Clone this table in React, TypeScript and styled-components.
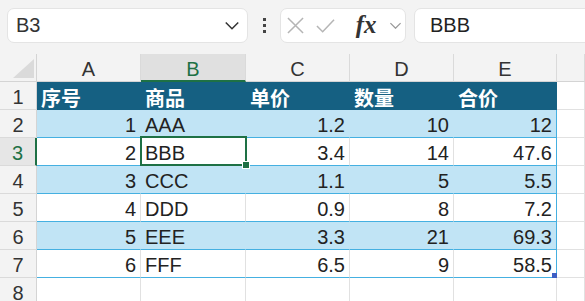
import React from 'react'
import styled, { createGlobalStyle, css } from 'styled-components'

const GREEN = '#1e7145'
const HEAD = '#156082'
const BAND = '#c1e4f5'
const LINE = '#45b0e1'
const GRID = '#e1e1e1'

type Tone = 'head' | 'band' | 'plain' | 'none'

const cols = ['A', 'B', 'C', 'D', 'E']
const header = ['序号', '商品', '单价', '数量', '合价']
const rows: (string | number)[][] = [
  [1, 'AAA', 1.2, 10, 12],
  [2, 'BBB', 3.4, 14, 47.6],
  [3, 'CCC', 1.1, 5, 5.5],
  [4, 'DDD', 0.9, 8, 7.2],
  [5, 'EEE', 3.3, 21, 69.3],
  [6, 'FFF', 6.5, 9, 58.5],
]

function App(): JSX.Element {
  return (
    <>
      <GlobalStyle />
      <FormulaBar>
        <NameBox>
          <span>B3</span>
          <Chevron size={16} color="#333" />
        </NameBox>
        <Kebab>
          <Dot />
          <Dot />
          <Dot />
        </Kebab>
        <ActionBox>
          <svg width="17" height="17" viewBox="0 0 18 18">
            <path d="M1 1 L17 17 M17 1 L1 17" stroke="#b5b5b5" strokeWidth="1.6" fill="none" />
          </svg>
          <svg width="19" height="16" viewBox="0 0 20 16">
            <path d="M1 8 L7 14 L19 1.5" stroke="#b5b5b5" strokeWidth="1.6" fill="none" />
          </svg>
          <Fx>fx</Fx>
          <Chevron size={13} color="#999" />
        </ActionBox>
        <FormulaInput>BBB</FormulaInput>
      </FormulaBar>

      <Sheet>
        <Corner>
          <svg width="21" height="19" viewBox="0 0 21 19">
            <path d="M21 0 L21 19 L0 19 Z" fill="#dadada" />
          </svg>
        </Corner>
        {cols.map((c) => (
          <ColHead key={c} $selected={c === 'B'}>
            {c}
          </ColHead>
        ))}
        <ColHead $selected={false} />

        <RowHead $selected={false}>1</RowHead>
        {header.map((h, i) => (
          <Cell key={h} $tone="head" $last={i === 4}>
            {h}
          </Cell>
        ))}
        <Cell $tone="none" />

        {rows.map((r, ri) => (
          <React.Fragment key={ri}>
            <RowHead $selected={ri === 1}>{ri + 2}</RowHead>
            {r.map((v, ci) => (
              <Cell
                key={ci}
                $tone={ri % 2 === 0 ? 'band' : 'plain'}
                $right={typeof v === 'number'}
                $last={ci === 4}
                $selected={ri === 1 && ci === 1}
                $resize={ri === 5 && ci === 4}
              >
                {v}
              </Cell>
            ))}
            <Cell $tone="none" />
          </React.Fragment>
        ))}

        <RowHead $selected={false}>8</RowHead>
        {cols.map((c) => (
          <Cell key={c} $tone="none" />
        ))}
        <Cell $tone="none" />
      </Sheet>
    </>
  )
}

function Chevron({ size, color }: { size: number; color: string }): JSX.Element {
  return (
    <svg width={size} height={size * 0.6} viewBox="0 0 16 10">
      <path d="M1.5 1.5 L8 8 L14.5 1.5" stroke={color} strokeWidth="1.6" fill="none" />
    </svg>
  )
}

const GlobalStyle = createGlobalStyle`
  html, body {
    margin: 0;
    background: #f3f3f3;
    overflow: hidden;
  }
  body {
    font-family: 'Liberation Sans', 'Noto Sans CJK SC', sans-serif;
    color: #222;
  }
`

const FormulaBar = styled.div`
  display: flex;
  align-items: center;
  height: 54px;
  padding: 0 0 3px 7px;
  box-sizing: border-box;
  overflow: hidden;
`

const Box = styled.div`
  height: 35px;
  box-sizing: border-box;
  background: #fff;
  border: 1px solid #e4e4e4;
  border-radius: 7px;
  display: flex;
  align-items: center;
`

const NameBox = styled(Box)`
  width: 241px;
  flex: none;
  justify-content: space-between;
  padding: 0 7px 0 8px;
  font-size: 20px;
  color: #333;
`

const Kebab = styled.div`
  width: 32px;
  flex: none;
  display: flex;
  flex-direction: column;
  align-items: center;
  gap: 3px;
`

const Dot = styled.span`
  width: 3px;
  height: 3px;
  background: #444;
`

const ActionBox = styled(Box)`
  width: 126px;
  flex: none;
  padding: 0 3px 0 6px;
  justify-content: space-between;
`

const Fx = styled.span`
  font-family: 'Liberation Serif', serif;
  font-style: italic;
  font-weight: 700;
  font-size: 25px;
  line-height: 1;
  color: #333;
  margin: 0 0 3px 8px;
`

const FormulaInput = styled(Box)`
  flex: none;
  width: 200px;
  margin-left: 8px;
  padding-left: 15px;
  font-size: 20px;
  color: #222;
`

const Sheet = styled.div`
  display: grid;
  grid-template-columns: 37px 104px 105px 104px 104px 103px 1fr;
  grid-auto-rows: 28px;
  font-size: 20px;
`

const Corner = styled.div`
  display: flex;
  align-items: flex-end;
  justify-content: flex-end;
  padding: 0 2px 3px 0;
  border-bottom: 1px solid #d4d4d4;
  border-right: 1px solid #d4d4d4;
`

const ColHead = styled.div<{ $selected: boolean }>`
  display: flex;
  align-items: center;
  justify-content: center;
  padding-top: 3px;
  box-sizing: border-box;
  color: #333;
  border-right: 1px solid #dadada;
  border-bottom: 1px solid #d4d4d4;
  ${(p) =>
    p.$selected &&
    css`
      background: #e0e0e0;
      color: ${GREEN};
      border-bottom: 2px solid ${GREEN};
      padding-top: 4px;
    `}
`

const RowHead = styled.div<{ $selected: boolean }>`
  display: flex;
  align-items: center;
  justify-content: center;
  padding-top: 3px;
  box-sizing: border-box;
  color: #333;
  border-bottom: 1px solid #dadada;
  border-right: 1px solid #d4d4d4;
  background: #f3f3f3;
  ${(p) =>
    p.$selected &&
    css`
      background: #e6e6e6;
      color: ${GREEN};
      border-right: 2px solid ${GREEN};
    `}
`

const toneStyles: Record<Tone, ReturnType<typeof css>> = {
  head: css`
    background: ${HEAD};
    color: #fff;
    font-weight: 700;
    border-right-color: ${HEAD};
    border-bottom-color: ${HEAD};
  `,
  band: css`
    background: ${BAND};
    border-right-color: ${BAND};
    border-bottom-color: ${LINE};
  `,
  plain: css`
    background: #fff;
    border-bottom-color: ${LINE};
  `,
  none: css`
    background: #fff;
  `,
}

const Cell = styled.div<{
  $tone: Tone
  $right?: boolean
  $last?: boolean
  $selected?: boolean
  $resize?: boolean
}>`
  position: relative;
  display: flex;
  align-items: center;
  justify-content: ${(p) => (p.$right ? 'flex-end' : 'flex-start')};
  padding: 3px 4px 0;
  box-sizing: border-box;
  border-right: 1px solid ${GRID};
  border-bottom: 1px solid ${GRID};
  font-family: 'Liberation Sans', 'Noto Sans CJK SC', sans-serif;
  white-space: nowrap;
  ${(p) => toneStyles[p.$tone]}
  ${(p) =>
    p.$last &&
    p.$tone !== 'head' &&
    css`
      border-right-color: ${LINE};
    `}
  ${(p) =>
    p.$selected &&
    css`
      z-index: 2;
      &::after {
        content: '';
        position: absolute;
        top: -2px;
        left: -1px;
        right: -2px;
        bottom: -1px;
        border: 2px solid ${GREEN};
      }
      &::before {
        content: '';
        position: absolute;
        right: -5px;
        bottom: -4px;
        width: 6px;
        height: 6px;
        background: ${GREEN};
        border: 1px solid #fff;
        z-index: 3;
      }
    `}
  ${(p) =>
    p.$resize &&
    css`
      &::after {
        content: '';
        position: absolute;
        right: -1px;
        bottom: -1px;
        width: 5px;
        height: 5px;
        background: #3d5fc4;
      }
    `}
`

export default App
